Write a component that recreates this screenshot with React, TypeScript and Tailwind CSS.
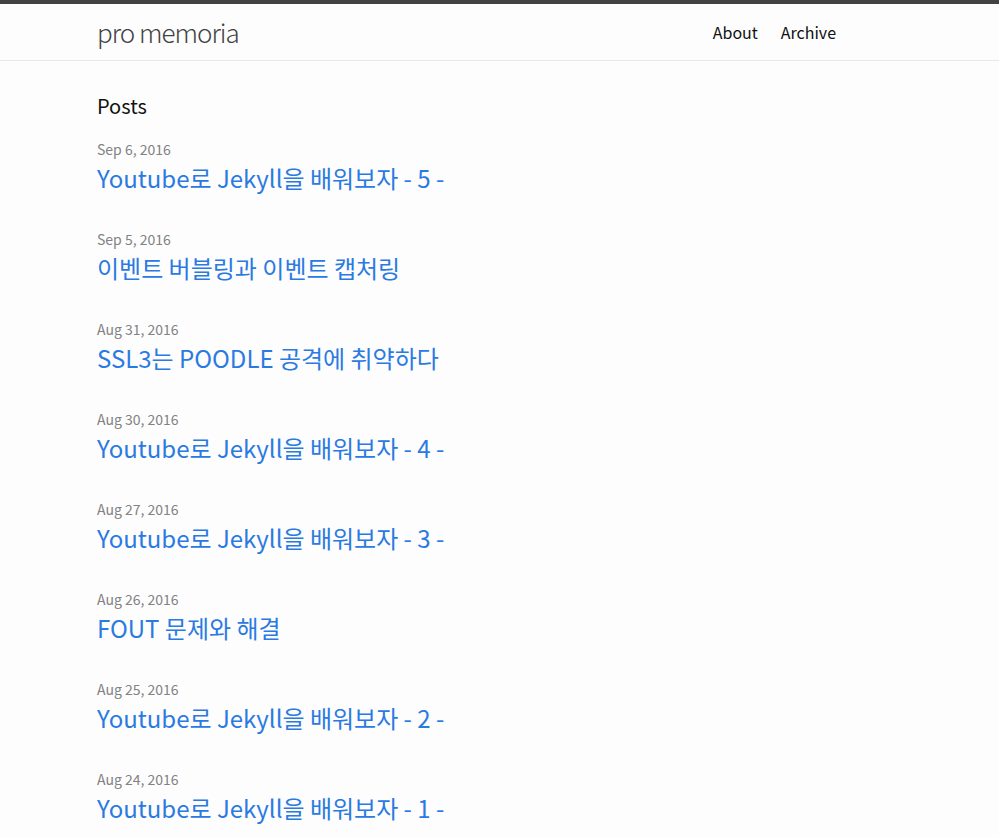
import React from "react";

const posts = [
  { date: "Sep 6, 2016", title: "Youtube로 Jekyll을 배워보자 - 5 -" },
  { date: "Sep 5, 2016", title: "이벤트 버블링과 이벤트 캡처링" },
  { date: "Aug 31, 2016", title: "SSL3는 POODLE 공격에 취약하다" },
  { date: "Aug 30, 2016", title: "Youtube로 Jekyll을 배워보자 - 4 -" },
  { date: "Aug 27, 2016", title: "Youtube로 Jekyll을 배워보자 - 3 -" },
  { date: "Aug 26, 2016", title: "FOUT 문제와 해결" },
  { date: "Aug 25, 2016", title: "Youtube로 Jekyll을 배워보자 - 2 -" },
  { date: "Aug 24, 2016", title: "Youtube로 Jekyll을 배워보자 - 1 -" },
];

export default function App() {
  return (
    <div
      className="min-h-[837px] bg-[#fdfdfd] text-[#111111]"
      style={{ fontFamily: '"Noto Sans CJK KR", "Noto Sans", sans-serif' }}
    >
      <header className="border-t-[4px] border-[#424242] border-b border-b-[#e8e8e8]">
        <div className="ml-[97px] w-[739px] h-[56px] flex items-center justify-between">
          <a className="text-[26px] font-light tracking-[-1px] leading-[56px] text-[#424242]">
            pro memoria
          </a>
          <nav className="flex items-center gap-[23px] text-[16px] leading-[56px] text-[#111111]">
            <a>About</a>
            <a>Archive</a>
          </nav>
        </div>
      </header>
      <main className="ml-[97px] w-[740px] pt-[30px]">
        <h1 className="text-[20px] leading-[30px] mb-[18px]">Posts</h1>
        <ul>
          {posts.map((p, i) => (
            <li key={i} className="mb-[33px]">
              <div className="text-[14px] leading-[21px] text-[#828282]">{p.date}</div>
              <h2 className="text-[24px] leading-[36px] text-[#2a7ae2]">
                <a>{p.title}</a>
              </h2>
            </li>
          ))}
        </ul>
      </main>
    </div>
  );
}
